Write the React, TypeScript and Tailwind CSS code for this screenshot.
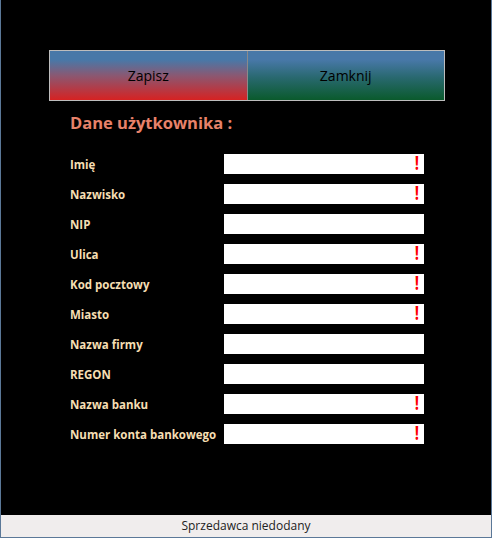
const fields: { label: string; required: boolean }[] = [
  { label: 'Imię', required: true },
  { label: 'Nazwisko', required: true },
  { label: 'NIP', required: false },
  { label: 'Ulica', required: true },
  { label: 'Kod pocztowy', required: true },
  { label: 'Miasto', required: true },
  { label: 'Nazwa firmy', required: false },
  { label: 'REGON', required: false },
  { label: 'Nazwa banku', required: true },
  { label: 'Numer konta bankowego', required: true },
];

export default function App() {
  return (
    <div
      className="w-[492px] h-[538px] flex flex-col bg-black border-x border-b border-[#5b7898]"
      style={{ fontFamily: '"Open Sans", "Noto Sans", sans-serif' }}
    >
      <div className="flex-1 pt-[50px] pl-[48px]">
        {/* Action buttons */}
        <div className="flex w-[396px] h-[51px] border border-[#bdbdbd]">
          <button className="flex-1 flex items-center justify-center text-[14px] text-black bg-[linear-gradient(to_bottom,#4878a8_18%,#8a5872_50%,#d62222_100%)]">
            Zapisz
          </button>
          <div className="w-px bg-[#8a8a8a]" />
          <button className="flex-1 flex items-center justify-center text-[14px] text-black bg-[linear-gradient(to_bottom,#4878a8_18%,#28686e_55%,#0a5a2c_100%)]">
            Zamknij
          </button>
        </div>

        <h2 className="ml-[21px] mt-[9px] h-[26px] leading-[26px] text-[16.5px] font-bold text-[#e8826a]">
          Dane użytkownika :
        </h2>

        <div className="mt-[13px] ml-[21px] flex flex-col">
          {fields.map((f) => (
            <div key={f.label} className="flex items-center h-[30px]">
              <span className="w-[154px] pt-[2px] text-[11.5px] font-bold text-[#f5deb3]">{f.label}</span>
              <div className="relative w-[200px] h-[20px] bg-white">
                {f.required && (
                  <span className="absolute right-[4px] top-[-5px] text-[20px] leading-[28px] font-bold text-[#ff0000] scale-x-75">!</span>
                )}
              </div>
            </div>
          ))}
        </div>
      </div>

      <div className="h-[22px] bg-[#f0eded] flex items-center justify-center text-[12px] text-[#222]">
        Sprzedawca niedodany
      </div>
    </div>
  );
}
